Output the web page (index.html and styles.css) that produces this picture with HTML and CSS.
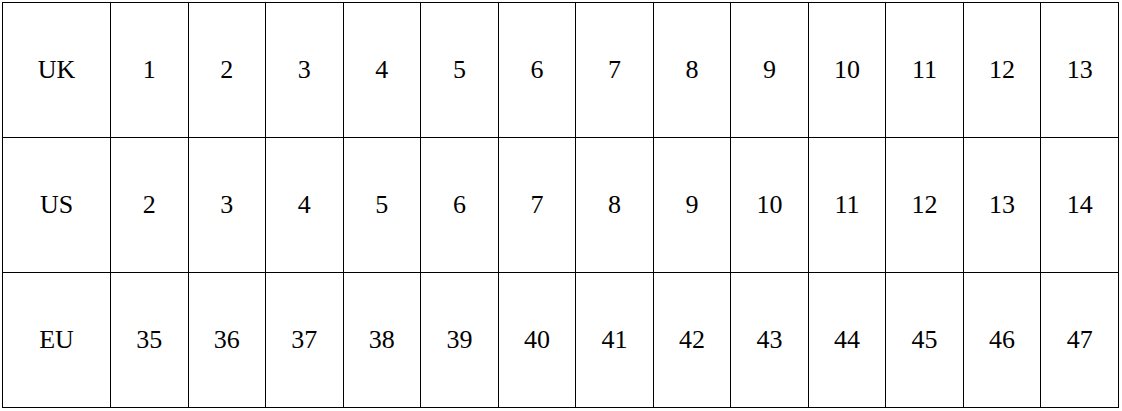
FILE: index.html
```html
<!DOCTYPE html>
<html>
<head>
<meta charset="utf-8">
<link rel="stylesheet" href="styles.css">
</head>
<body>
<table class="size-table">
  <colgroup>
    <col class="col-label">
    <col span="13">
  </colgroup>
  <tr>
    <td>UK</td><td>1</td><td>2</td><td>3</td><td>4</td><td>5</td><td>6</td><td>7</td><td>8</td><td>9</td><td>10</td><td>11</td><td>12</td><td>13</td>
  </tr>
  <tr>
    <td>US</td><td>2</td><td>3</td><td>4</td><td>5</td><td>6</td><td>7</td><td>8</td><td>9</td><td>10</td><td>11</td><td>12</td><td>13</td><td>14</td>
  </tr>
  <tr>
    <td>EU</td><td>35</td><td>36</td><td>37</td><td>38</td><td>39</td><td>40</td><td>41</td><td>42</td><td>43</td><td>44</td><td>45</td><td>46</td><td>47</td>
  </tr>
</table>
</body>
</html>
```

FILE: styles.css
```css
html, body {
  margin: 0;
  padding: 0;
  background: #ffffff;
}
body {
  padding: 2px 0 0 2px;
  font-family: "Liberation Serif", "Times New Roman", serif;
  color: #000000;
}
.size-table {
  border-collapse: collapse;
  table-layout: fixed;
  width: 1117px;
  height: 406px;
}
.col-label {
  width: 108px;
}
.size-table td {
  border: 1px solid #000000;
  text-align: center;
  vertical-align: middle;
  font-size: 26px;
  padding: 0;
  height: 134px;
}
```
